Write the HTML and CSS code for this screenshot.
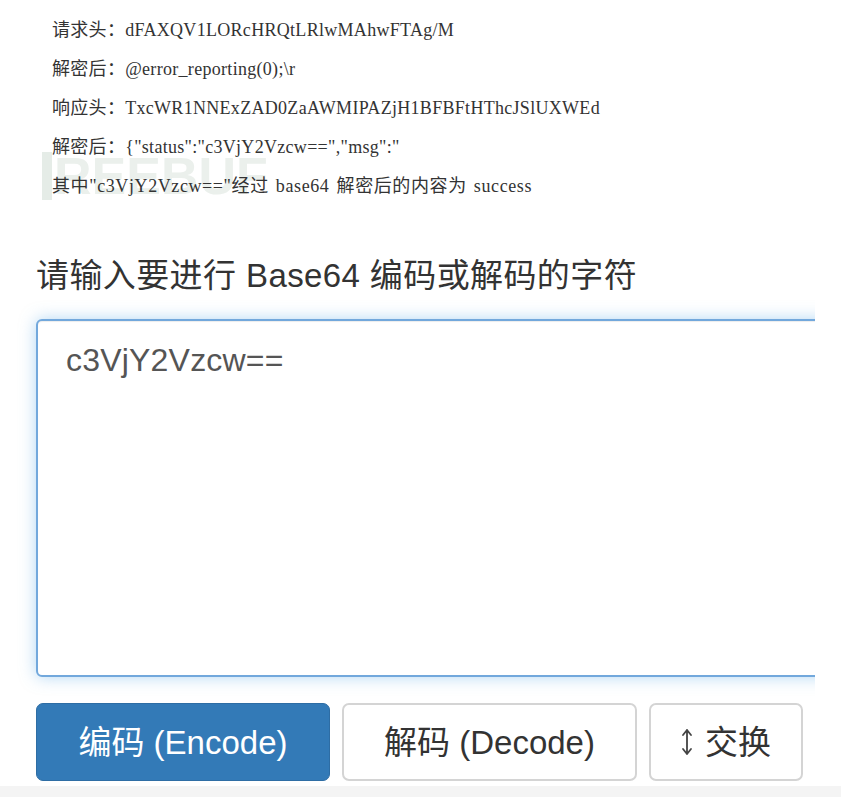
FILE: index.html
```html
<!DOCTYPE html>
<html lang="zh-CN">
<head>
<meta charset="utf-8">
<title>Base64</title>
<link rel="stylesheet" href="styles.css">
</head>
<body>
<div class="page">
  <section class="article">
    <div class="watermark" aria-hidden="true"><span class="wm-bar"></span>REEBUF</div>
    <p>请求头：dFAXQV1LORcHRQtLRlwMAhwFTAg/M</p>
    <p>解密后：@error_reporting(0);\r</p>
    <p>响应头：TxcWR1NNExZAD0ZaAWMIPAZjH1BFBFtHThcJSlUXWEd</p>
    <p>解密后：{"status":"c3VjY2Vzcw==","msg":"</p>
    <p class="spaced">其中"c3VjY2Vzcw=="经过 base64 解密后的内容为 success</p>
  </section>
  <section class="tool">
    <h2 class="tool-title">请输入要进行 Base64 编码或解码的字符</h2>
    <div class="input-box">c3VjY2Vzcw==</div>
    <div class="actions">
      <button class="btn btn-primary btn-encode">编码 (Encode)</button>
      <button class="btn btn-default btn-decode">解码 (Decode)</button>
      <button class="btn btn-default btn-swap"><svg class="swap-icon" width="12" height="30" viewBox="0 0 12 30"><path d="M6 3 V27 M2 8 L6 3 L10 8 M2 22 L6 27 L10 22" fill="none" stroke="#444" stroke-width="1.8" stroke-linecap="round" stroke-linejoin="round"/></svg>交换</button>
    </div>
  </section>
  <div class="bottom-strip"></div>
</div>
</body>
</html>
```
FILE: styles.css
```css
html, body {
  margin: 0;
  padding: 0;
  background: #fff;
}
.page {
  width: 841px;
  height: 797px;
  overflow: hidden;
  display: flex;
  flex-direction: column;
}
.article {
  position: relative;
  padding: 11px 0 0 52px;
}
.article p {
  position: relative;
  z-index: 1;
  margin: 0;
  font: 18px/39px "Liberation Serif", "Noto Sans CJK SC", serif;
  letter-spacing: 0.3px;
  color: #333;
  white-space: nowrap;
}
.article p.spaced {
  letter-spacing: 0.6px;
  word-spacing: 2px;
}
.watermark {
  position: absolute;
  left: 42px;
  top: 151px;
  z-index: 0;
  display: flex;
  align-items: center;
  font: bold 52px/50px "Liberation Sans", Arial, sans-serif;
  color: #ebf0ec;
  letter-spacing: 0;
}
.wm-bar {
  display: inline-block;
  width: 10px;
  height: 48px;
  background: #e5ece7;
  margin-right: 2px;
}
.tool {
  width: 815px;
  box-sizing: border-box;
  padding-left: 36px;
  overflow-x: clip;
  overflow-y: visible;
}
.tool-title {
  margin: 50px 0 0 0;
  font: 400 33px/40px "Liberation Sans", "Noto Sans CJK SC", sans-serif;
  letter-spacing: 0.4px;
  color: #333;
  white-space: nowrap;
}
.input-box {
  margin-top: 23px;
  width: 820px;
  height: 358px;
  box-sizing: border-box;
  border: 2px solid #72a8dc;
  border-radius: 6px;
  padding: 21px 28px;
  font: 32px/36px "Liberation Sans", Arial, sans-serif;
  letter-spacing: 0.2px;
  color: #555;
  background: #fff;
  box-shadow: inset 0 1px 1px rgba(0,0,0,.075), 0 0 16px rgba(102,175,233,.5);
}
.actions {
  display: flex;
  gap: 12px;
  margin-top: 26px;
}
.btn {
  height: 78px;
  box-sizing: border-box;
  border-radius: 7px;
  font: 33px/1 "Liberation Sans", "Noto Sans CJK SC", sans-serif;
  display: flex;
  align-items: center;
  justify-content: center;
  padding: 0;
}
.btn-primary {
  background: #337ab7;
  border: 1px solid #2e6da4;
  color: #fff;
}
.btn-default {
  background: #fff;
  border: 2px solid #d4d4d4;
  color: #333;
}
.btn-encode { width: 294px; }
.btn-decode { width: 295px; }
.btn-swap { width: 154px; gap: 12px; }
.bottom-strip {
  margin-top: 5px;
  flex: 1;
  background: #f4f4f4;
}
```
